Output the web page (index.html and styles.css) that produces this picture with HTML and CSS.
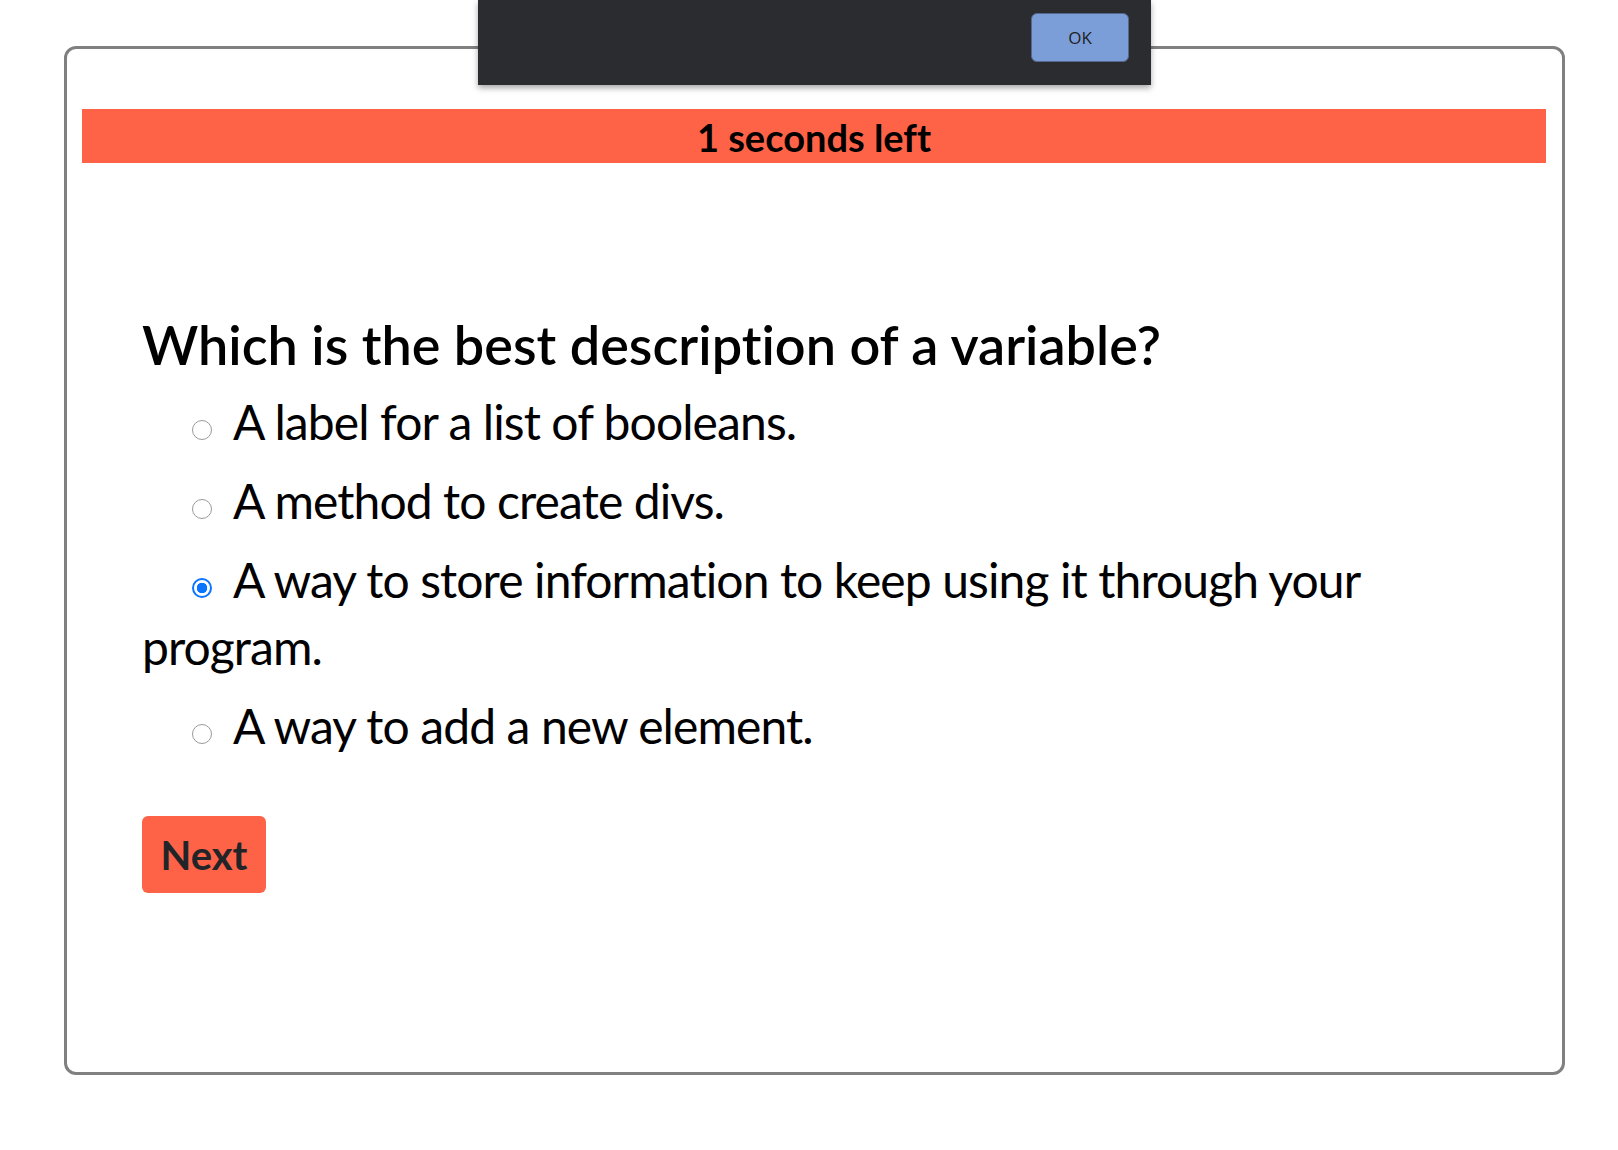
FILE: index.html
```html
<!DOCTYPE html>
<html lang="en">
<head>
<meta charset="utf-8">
<title>Quiz</title>
<link rel="stylesheet" href="styles.css">
</head>
<body>
<div class="dialog">
  <button class="dialog-ok" type="button">OK</button>
</div>
<main class="card">
  <div class="timer">1 seconds left</div>
  <section class="quiz">
    <h2 class="question">Which is the best description of a variable?</h2>
    <div class="options">
      <label class="option"><input class="radio" type="radio" name="q">A label for a list of booleans.</label>
      <label class="option"><input class="radio" type="radio" name="q">A method to create divs.</label>
      <label class="option"><input class="radio" type="radio" name="q" checked>A way to store information to keep using it through your program.</label>
      <label class="option"><input class="radio" type="radio" name="q">A way to add a new element.</label>
    </div>
    <button class="next" type="button">Next</button>
  </section>
</main>
</body>
</html>
```
FILE: styles.css
```css
html, body {
  margin: 0;
  padding: 0;
  background: #ffffff;
}

body {
  font-family: Lato, "Open Sans", sans-serif;
  font-variant-ligatures: no-common-ligatures;
  color: #000;
  padding: 46px 0 0 64px;
}

.dialog {
  position: absolute;
  top: 0;
  left: 478px;
  width: 673px;
  height: 85px;
  box-sizing: border-box;
  background: #2b2c30;
  box-shadow: 0 3px 6px rgba(0, 0, 0, 0.35);
  display: flex;
  justify-content: flex-end;
  align-items: flex-start;
  padding: 13px 22px 0 0;
  z-index: 10;
}

.dialog-ok {
  width: 98px;
  height: 49px;
  box-sizing: border-box;
  background: #7b9ed9;
  border: 1px solid #55688c;
  border-radius: 6px;
  color: #1f1f1f;
  font-family: "Open Sans", sans-serif;
  font-size: 17px;
  padding: 0;
}

.card {
  width: 1501px;
  height: 1029px;
  box-sizing: border-box;
  border: 3px solid #808080;
  border-radius: 12px;
  padding: 60px 16px 0 15px;
}

.timer {
  height: 52px;
  padding-top: 2px;
  background: #ff6347;
  text-align: center;
  font-weight: 700;
  font-size: 38px;
  line-height: 53px;
}

.quiz {
  padding: 0 60px;
}

.question {
  margin: 146px 0 7px;
  font-size: 54px;
  line-height: 72px;
  font-weight: 600;
}

.options {
  display: flex;
  flex-direction: column;
  gap: 12px;
}

.option {
  display: block;
  font-size: 48px;
  line-height: 67px;
  text-indent: 50px;
  letter-spacing: -0.9px;
}

.radio {
  appearance: none;
  -webkit-appearance: none;
  display: inline-block;
  width: 20px;
  height: 20px;
  margin: 0 21px 0 0;
  box-sizing: border-box;
  border: 1.5px solid #9a9a9a;
  border-radius: 50%;
  background: #fff;
  vertical-align: baseline;
}

.radio:checked {
  border: 2px solid #0a75ff;
  background: radial-gradient(circle, #0a75ff 0 5px, #fff 5.5px);
}

.next {
  display: block;
  margin-top: 57px;
  width: 124px;
  height: 77px;
  background: #ff6347;
  border: none;
  border-radius: 6px;
  color: #212529;
  font-family: Lato, sans-serif;
  font-weight: 700;
  font-size: 40px;
  padding: 0;
}
```
